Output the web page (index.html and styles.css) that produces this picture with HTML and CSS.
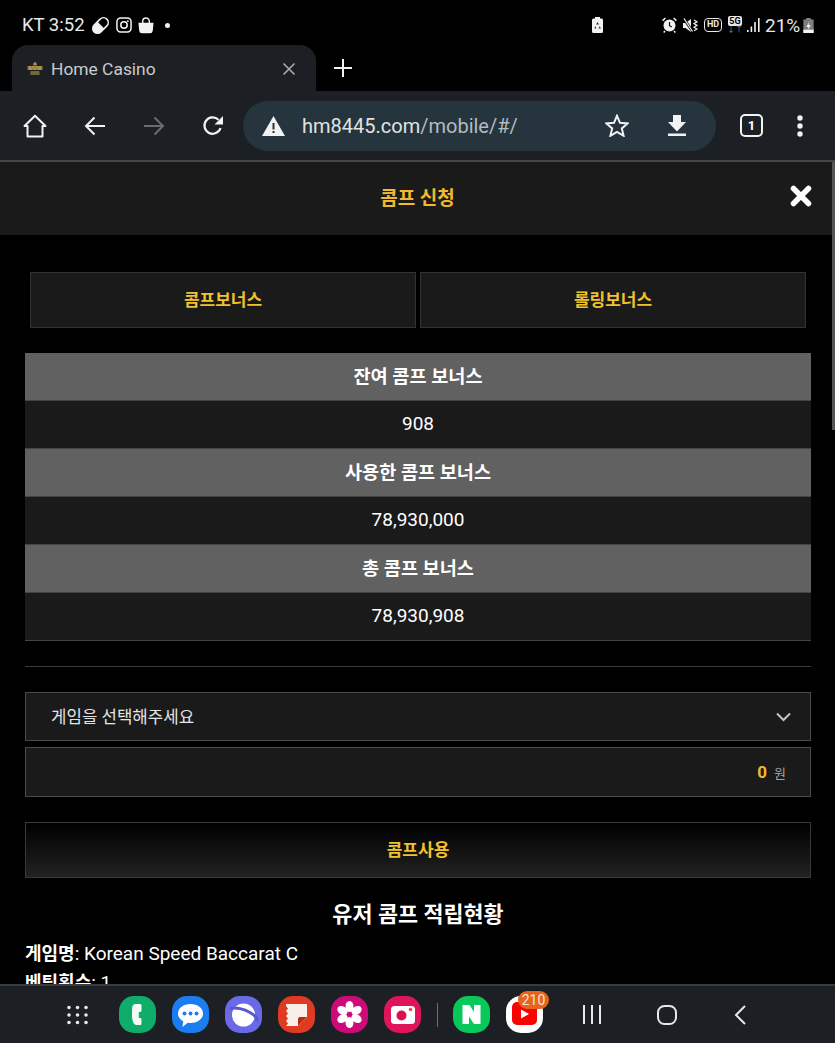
FILE: index.html
```html
<!DOCTYPE html>
<html lang="ko">
<head>
    <meta charset="UTF-8">
    <meta name="viewport" content="width=device-width, initial-scale=1.0">
    <title>Home Casino</title>
    <link rel="stylesheet" href="styles.css">
</head>
<body>
    <div class="status-bar">
        <div class="status-left">
            <span class="status-text">KT 3:52</span>
            <svg class="st-icon st-pill" width="19" height="19" viewBox="0 0 18 18"><g transform="rotate(-45 9 9)"><rect x=".5" y="4.500" width="17" height="9" rx="4.500" fill="none" stroke="#f2f2f2" stroke-width="1.500"/><path d="M5 4.500h4.500v9H5a4.500 4.500 0 0 1 0-9z" fill="#f2f2f2"/></g></svg>
            <svg class="st-icon" width="16" height="16" viewBox="0 0 17 17" fill="none" stroke="#f2f2f2"><rect x="1" y="1" width="15" height="15" rx="4" stroke-width="1.600"/><circle cx="8.500" cy="8.500" r="3.400" stroke-width="1.600"/><circle cx="12.600" cy="4.400" r=".9" fill="#f2f2f2" stroke="none"/></svg>
            <svg class="st-icon" width="16" height="17" viewBox="0 0 17 18"><path d="M.5 6h16l-.8 8.500a3 3 0 0 1-3 2.700H4.300a3 3 0 0 1-3-2.700z" fill="#f2f2f2"/><path d="M5 7V4.500a3.500 3.500 0 0 1 7 0V7" fill="none" stroke="#f2f2f2" stroke-width="1.500"/></svg>
            <span class="st-dot"></span>
        </div>
        <div class="status-mid">
            <svg width="11" height="16" viewBox="0 0 11 16"><path d="M3 0h5v1.500h1.500A1.500 1.500 0 0 1 11 3v11.500a1.500 1.500 0 0 1-1.500 1.500h-8A1.500 1.500 0 0 1 0 14.500V3a1.500 1.500 0 0 1 1.500-1.500H3z" fill="#f2f2f2"/><path d="M5.500 5 7 7.500H4zM3.200 9 4.500 11.500H2.500zM7.800 9l1 2.500H6.500z" fill="#333"/></svg>
        </div>
        <div class="status-right">
            <svg width="15" height="16" viewBox="0 0 15 16"><circle cx="7.500" cy="8.500" r="6" fill="#f2f2f2"/><path d="M7.500 5v3.700l2.300 1.300" fill="none" stroke="#111" stroke-width="1.200"/><path d="M.6 3.600 3.400 1M14.400 3.600 11.600 1M3 14l-1.300 1.500M12 14l1.300 1.500" stroke="#f2f2f2" stroke-width="1.500"/></svg>
            <svg width="15" height="15" viewBox="0 0 15 15"><path d="M0 5h2.500L8 1v13L2.500 10H0z" fill="#f2f2f2"/><path d="M1 1l9 13" stroke="#000" stroke-width="2.500"/><path d="M1 .5l8.500 13" stroke="#f2f2f2" stroke-width="1.200"/><path d="M11 2l3 1.800-3 1.800 3 1.800-3 1.800 3 1.800-3 1.800" fill="none" stroke="#f2f2f2" stroke-width="1.200"/></svg>
            <span class="st-hd">HD</span>
            <span class="st-5g"><b>5G</b><i>↓↑</i></span>
            <svg class="st-signal" width="13" height="14" viewBox="0 0 13 14" fill="#f2f2f2"><rect x="0" y="12" width="1.600" height="2"/><rect x="3.600" y="8.500" width="1.600" height="5.500"/><rect x="7.200" y="4" width="1.600" height="10"/><rect x="11" y="0" width="1.600" height="14"/></svg>
            <span class="status-text status-pct">21%</span>
            <svg class="st-batt" width="11" height="15" viewBox="0 0 11 16"><path d="M3 0h5v1.500h3V16H0V1.500h3z" fill="#7d7d7d"/><rect y="12.500" width="11" height="3.500" fill="#f2f2f2"/><path d="M6.500 4 3 9.500h2.300L4.500 13 8 7.500H5.700z" fill="#f2f2f2"/></svg>
        </div>
    </div>

    <div class="tab-strip">
        <div class="tab">
            <svg class="favicon" width="16" height="15" viewBox="0 0 16 15"><path d="M6 3 8 .5 10 3 9.500 4.500h-3z" fill="#a58a45"/><rect x=".5" y="5" width="15" height="4" fill="#8f7a3e"/><path d="M2 6h2M5 6h2M9 6h2M12 6h2M2 8h3M7 8h2M11 8h3" stroke="#d8c98f" stroke-width=".7"/><rect x="3.500" y="10" width="9" height="4" fill="#7a6632"/></svg>
            <span class="tab-title">Home Casino</span>
            <svg width="14" height="14" viewBox="0 0 14 14"><path d="M1.500 1.500l11 11M12.500 1.500l-11 11" stroke="#aeb1b4" stroke-width="1.500"/></svg>
        </div>
        <svg class="new-tab" width="18" height="18" viewBox="0 0 18 18"><path d="M9 0v18M0 9h18" stroke="#f2f2f2" stroke-width="2"/></svg>
    </div>

    <div class="toolbar">
        <svg class="tb-home" width="24" height="24" viewBox="0 0 24 24" fill="none" stroke="#f2f2f2" stroke-width="2" stroke-linejoin="round"><path d="M1.500 12 12 1.800 22.500 12H19.500V22.500H4.500V12z"/></svg>
        <svg class="tb-back" width="22" height="20" viewBox="0 0 22 20" fill="none" stroke="#f2f2f2" stroke-width="2"><path d="M21 10H2M10.500 1.500 2 10l8.500 8.500"/></svg>
        <svg class="tb-forward" width="22" height="20" viewBox="0 0 22 20" fill="none" stroke="#6a6d70" stroke-width="2"><path d="M1 10h19M11.500 1.500 20 10l-8.500 8.500"/></svg>
        <svg class="tb-reload" width="22" height="22" viewBox="0 0 22 22" fill="none"><path d="M18.500 13a8.200 8.200 0 1 1-2-8.200" stroke="#f2f2f2" stroke-width="2.200"/><path d="M21 1v8.500h-8.500z" fill="#f2f2f2"/></svg>
        <div class="omnibox">
            <svg class="warn" width="23" height="20" viewBox="0 0 23 20"><path d="M11.500 0 23 20H0z" fill="#f2f2f2"/><path d="M10.500 7h2v6.500h-2zM10.500 15h2v2h-2z" fill="#25343d"/></svg>
            <span class="url"><span class="url-host">hm8445.com</span>/mobile/#/</span>
            <svg class="star" width="24" height="23" viewBox="0 0 24 23"><path d="M12 1.800l3 7 7.600.6-5.800 5 1.800 7.400L12 17.900l-6.600 3.900 1.800-7.400-5.800-5L9 8.800z" fill="none" stroke="#f2f2f2" stroke-width="2"/></svg>
            <svg class="dl" width="18" height="21" viewBox="0 0 18 21"><path d="M5 0h8v7h5l-9 9.500L0 7h5z" fill="#f2f2f2"/><rect y="18.500" width="18" height="2.500" fill="#f2f2f2"/></svg>
        </div>
        <span class="tab-count">1</span>
        <svg class="tb-menu" width="6" height="22" viewBox="0 0 6 22" fill="#f2f2f2"><circle cx="3" cy="3" r="2.700"/><circle cx="3" cy="11" r="2.700"/><circle cx="3" cy="19" r="2.700"/></svg>
    </div>

    <div class="page">
        <div class="modal-head">
            <h1 class="modal-title">콤프 신청</h1>
            <svg class="modal-close" width="22" height="22" viewBox="0 0 22 22"><path d="M3.500 3.500l15 15M18.500 3.500l-15 15" stroke="#fff" stroke-width="5.500" stroke-linecap="round"/></svg>
        </div>

        <div class="content">
            <div class="bonus-tabs">
                <button class="bonus-tab">콤프보너스</button>
                <button class="bonus-tab">롤링보너스</button>
            </div>

            <div class="summary">
                <div class="summary-head">잔여 콤프 보너스</div>
                <div class="summary-value">908</div>
                <div class="summary-head">사용한 콤프 보너스</div>
                <div class="summary-value">78,930,000</div>
                <div class="summary-head">총 콤프 보너스</div>
                <div class="summary-value">78,930,908</div>
            </div>

            <div class="divider"></div>

            <div class="field field-select">
                <span>게임을 선택해주세요</span>
                <svg width="15" height="10" viewBox="0 0 15 10"><path d="M1 1.500 7.500 8 14 1.500" fill="none" stroke="#c4c4c4" stroke-width="2"/></svg>
            </div>
            <div class="field field-amount">
                <span class="amount">0</span><span class="won">원</span>
            </div>

            <button class="use-btn">콤프사용</button>

            <h2 class="log-title">유저 콤프 적립현황</h2>
            <p class="log-line"><b>게임명</b>: Korean Speed Baccarat C</p>
            <p class="log-line"><b>베팅횟수</b>: 1</p>
        </div>
        <div class="scroll-thumb"></div>
    </div>

    <div class="nav-bar">
        <svg class="apps" width="21" height="20" viewBox="0 0 21 20" fill="#e8e8e8"><circle cx="2" cy="2.500" r="1.800"/><circle cx="10.500" cy="2.500" r="1.800"/><circle cx="19" cy="2.500" r="1.800"/><circle cx="2" cy="10" r="1.800"/><circle cx="10.500" cy="10" r="1.800"/><circle cx="19" cy="10" r="1.800"/><circle cx="2" cy="17.500" r="1.800"/><circle cx="10.500" cy="17.500" r="1.800"/><circle cx="19" cy="17.500" r="1.800"/></svg>

        <div class="app-icon app-phone">
            <svg width="37" height="37" viewBox="0 0 37 37"><path d="M16.500 8h4.500c1 0 1.500.6 1.500 1.500v5c0 .9-.5 1.500-1.500 1.500h-1.200v6h1.200c1 0 1.500.6 1.500 1.500v4c0 1-.6 1.500-1.500 1.500h-3c-3 0-5-2.500-5-10.500V14c0-4 1-6 3.500-6z" fill="#f4fbf7"/></svg>
        </div>
        <div class="app-icon app-msg">
            <svg width="37" height="37" viewBox="0 0 37 37"><path d="M18.500 8C25.500 8 31 12 31 17.500S25.500 27 18.500 27c-1 0-2 0-2.800-.2L10.500 31l.8-5.700C8 23.600 6 20.800 6 17.500 6 12 11.500 8 18.500 8z" fill="#fff"/><circle cx="12.500" cy="17.500" r="2" fill="#1a7df0"/><circle cx="18.500" cy="17.500" r="2" fill="#1a7df0"/><circle cx="24.500" cy="17.500" r="2" fill="#1a7df0"/></svg>
        </div>
        <div class="app-icon app-internet">
            <svg width="37" height="37" viewBox="0 0 37 37"><circle cx="18.500" cy="19" r="11.500" fill="#fff"/><path d="M6 12.500c5-1.500 13 .5 19 4 4 2.300 7 5 7 7.500" fill="none" stroke="#5a57cf" stroke-width="3" stroke-linecap="round"/></svg>
        </div>
        <div class="app-icon app-notes">
            <svg width="37" height="37" viewBox="0 0 37 37"><path d="M8 8h21v13l-9 9H8l2-2.500L8 25l2-2.500L8 20l2-2.500L8 15l2-2.500L8 10z" fill="#f8efe8"/><path d="M29 21h-7a2 2 0 0 0-2 2v7z" fill="#b92b18"/></svg>
        </div>
        <div class="app-icon app-gallery">
            <svg width="37" height="37" viewBox="0 0 37 37" fill="#fff"><ellipse cx="18.500" cy="10.500" rx="4" ry="5.500"/><ellipse cx="18.500" cy="26.500" rx="4" ry="5.500"/><ellipse cx="11.500" cy="14.500" rx="5.500" ry="4" transform="rotate(30 11.500 14.500)"/><ellipse cx="25.500" cy="14.500" rx="5.500" ry="4" transform="rotate(-30 25.500 14.500)"/><ellipse cx="11.500" cy="22.500" rx="5.500" ry="4" transform="rotate(-30 11.500 22.500)"/><ellipse cx="25.500" cy="22.500" rx="5.500" ry="4" transform="rotate(30 25.500 22.500)"/><circle cx="18.500" cy="18.500" r="2.600" fill="#cc0b78"/></svg>
        </div>
        <div class="app-icon app-camera">
            <svg width="37" height="37" viewBox="0 0 37 37"><rect x="7" y="10" width="24" height="18" rx="3.500" fill="#fff"/><circle cx="17.500" cy="19.500" r="5" fill="#d9124f"/><circle cx="26.500" cy="13.500" r="1.800" fill="#e8503a"/></svg>
        </div>

        <span class="dock-sep"></span>

        <div class="app-icon app-naver">
            <svg width="37" height="37" viewBox="0 0 37 37"><path d="M9.500 9h7l4.500 7V9h6.500v19H21l-5-7.500V28H9.500z" fill="#fff"/></svg>
        </div>
        <div class="app-icon app-youtube">
            <svg width="37" height="37" viewBox="0 0 37 37"><rect x="6" y="6" width="25" height="23" rx="5" fill="#f00"/><path d="M15 13.500l8 4.500-8 4.500z" fill="#fff"/></svg>
            <span class="badge">210</span>
        </div>

        <svg class="nav-recent" width="20" height="19" viewBox="0 0 20 19" stroke="#e8e8e8" stroke-width="2"><path d="M2 0v19M10 0v19M18 0v19"/></svg>
        <svg class="nav-home" width="20" height="20" viewBox="0 0 20 20" fill="none" stroke="#e8e8e8" stroke-width="2"><rect x="1" y="1" width="18" height="18" rx="6.500"/></svg>
        <svg class="nav-back" width="12" height="20" viewBox="0 0 12 20" fill="none" stroke="#e8e8e8" stroke-width="2"><path d="M11 1 2 10l9 9"/></svg>
    </div>
</body>
</html>
```

FILE: styles.css
```css
* {
    box-sizing: border-box;
}
html, body {
    margin: 0;
    height: 1043px;
    overflow: hidden;
}
body {
    display: flex;
    flex-direction: column;
    background: #000;
    color: #fff;
    font-family: Roboto, "Noto Sans CJK KR", sans-serif;
}
svg {
    display: block;
    flex: none;
}

/* phone status bar */
.status-bar {
    height: 45px;
    flex: none;
    display: flex;
    align-items: center;
    padding: 5px 0 0 22px;
}
.status-text {
    font-size: 18.500px;
    color: #e8e8e8;
}
.status-left {
    display: flex;
    align-items: center;
    width: 570px;
}
.st-icon {
    margin-left: 6px;
}
.st-pill {
    margin-left: 6px;
}
.st-dot {
    width: 5px;
    height: 5px;
    margin-left: 11px;
    border-radius: 50%;
    background: #f2f2f2;
}
.status-mid {
    width: 70px;
}
.status-right {
    display: flex;
    align-items: center;
    gap: 6px;
}
.st-hd {
    width: 18px;
    height: 14px;
    border: 1.500px solid #e8e8e8;
    border-radius: 4px;
    font-size: 9px;
    font-weight: 700;
    line-height: 11px;
    text-align: center;
    color: #e8e8e8;
}
.st-5g {
    display: flex;
    flex-direction: column;
    align-items: center;
    width: 14px;
    margin: -2px 0 0;
}
.st-5g b {
    width: 14px;
    height: 10px;
    border-radius: 2px;
    background: #e8e8e8;
    color: #000;
    font-size: 9px;
    line-height: 10px;
    text-align: center;
}
.st-5g i {
    height: 7px;
    font-size: 8px;
    line-height: 7px;
    font-style: normal;
    color: #888;
}
.st-signal {
    margin-left: -1px;
}
.status-pct {
    font-size: 19px;
    margin-left: -1px;
    margin-right: -3px;
}

/* browser chrome */
.tab-strip {
    height: 46px;
    flex: none;
    display: flex;
    align-items: center;
    padding-left: 12px;
}
.tab {
    width: 304px;
    height: 46px;
    display: flex;
    align-items: center;
    padding: 1px 20px 0 15px;
    background: #1c2024;
    border-radius: 16px 16px 0 0;
}
.tab-title {
    flex: 1;
    margin-left: 8px;
    font-size: 17.400px;
    color: #c9cbcd;
}
.new-tab {
    margin-left: 18px;
}
.toolbar {
    height: 69px;
    flex: none;
    display: flex;
    align-items: center;
    padding: 0 0 0 23px;
    background: #1c2024;
}
.tb-back {
    margin-left: 37px;
}
.tb-forward {
    margin-left: 37px;
}
.tb-reload {
    margin-left: 37px;
}
.omnibox {
    width: 473px;
    height: 50px;
    margin-left: 19px;
    display: flex;
    align-items: center;
    padding-left: 19px;
    background: #25343d;
    border-radius: 25px;
}
.url {
    width: 303px;
    margin-left: 17px;
    font-size: 20px;
    color: #b4bbc0;
}
.url-host {
    color: #e0e3e5;
}
.dl {
    margin-left: 39px;
}
.tab-count {
    width: 23px;
    height: 23px;
    margin-left: 24px;
    border: 2px solid #f2f2f2;
    border-radius: 5px;
    font-size: 13px;
    font-weight: 700;
    line-height: 19px;
    text-align: center;
}
.tb-menu {
    margin-left: 34px;
}

/* web page */
.page {
    position: relative;
    flex: 1;
    min-height: 0;
    overflow: hidden;
    border-top: 2px solid #44474a;
    background: #000;
}
.modal-head {
    position: relative;
    height: 73px;
    display: flex;
    align-items: center;
    justify-content: center;
    padding-bottom: 4px;
    background: #1a1a1a;
}
.modal-title {
    margin: 0;
    font-size: 19px;
    font-weight: 700;
    color: #f0b92e;
}
.modal-close {
    position: absolute;
    top: 23px;
    right: 23px;
}
.content {
    padding: 37px 24px 0 25px;
}
.bonus-tabs {
    display: flex;
    gap: 4px;
    padding: 0 5px;
}
.bonus-tab {
    flex: 1;
    height: 56px;
    padding: 0 0 4px;
    background: #1a1a1a;
    border: 1px solid #333;
    color: #f0c22e;
    font: 700 17px Roboto, "Noto Sans CJK KR", sans-serif;
}
.summary {
    margin-top: 25px;
}
.summary-head {
    height: 48px;
    background: #616161;
    border-bottom: 1px solid #444;
    font-size: 18.600px;
    font-weight: 700;
    line-height: 48px;
    text-align: center;
}
.summary-value {
    height: 48px;
    background: #1a1a1a;
    border-bottom: 1px solid #444;
    font-size: 19px;
    line-height: 46px;
    text-align: center;
}
.divider {
    height: 1px;
    margin: 25px 0;
    background: #3d3d3d;
}
.field {
    display: flex;
    align-items: center;
    background: #1a1a1a;
    border: 1px solid #4a4a4a;
}
.field-select {
    height: 49px;
    justify-content: space-between;
    margin-bottom: 6px;
    padding: 0 19px 0 25px;
    font-size: 16.800px;
    color: #e4e4e4;
}
.field-select span {
    margin-bottom: 2px;
}
.field-amount {
    height: 50px;
    justify-content: flex-end;
    padding-right: 24px;
}
.amount {
    font-size: 17px;
    font-weight: 700;
    color: #f0b92e;
}
.won {
    margin-left: 7px;
    font-size: 13px;
    color: #a5a5a5;
}
.use-btn {
    display: block;
    width: 100%;
    height: 56px;
    margin-top: 25px;
    padding: 0 0 4px;
    background: linear-gradient(#000, #222);
    border: 1px solid #3a3a3a;
    color: #f0c22e;
    font: 700 17px Roboto, "Noto Sans CJK KR", sans-serif;
}
.log-title {
    margin: 23px 0 0;
    font-size: 21.800px;
    font-weight: 700;
    line-height: 28px;
    text-align: center;
}
.log-line {
    margin: 0;
    font-size: 19px;
    line-height: 29px;
}
.log-title + .log-line {
    margin-top: 10px;
}
.log-line b {
    font-size: 18px;
    font-weight: 700;
}
.scroll-thumb {
    position: absolute;
    top: 0;
    right: 0;
    width: 3px;
    height: 268px;
    background: #555;
}

/* samsung dock */
.nav-bar {
    height: 59px;
    flex: none;
    display: flex;
    align-items: center;
    padding-left: 67px;
    background: #1c2024;
    border-top: 2px solid #383b3f;
}
.app-icon {
    position: relative;
    width: 37px;
    height: 37px;
    margin-right: 16px;
    border-radius: 15px;
}
.apps {
    margin-right: 31px;
}
.app-phone { background: #0ead69; }
.app-msg { background: #1a7df0; }
.app-internet { background: #6a6ae8; }
.app-notes { background: #e03a22; }
.app-gallery { background: #cc0b78; }
.app-camera { background: #e0145a; }
.app-naver { background: #0ac75c; }
.app-youtube { background: #fff; }
.dock-sep {
    width: 1px;
    height: 24px;
    margin-right: 15px;
    background: #6b6d70;
}
.badge {
    position: absolute;
    top: -5px;
    left: 12px;
    width: 31px;
    height: 18px;
    border-radius: 9px;
    background: #e8641b;
    font-size: 14px;
    line-height: 18px;
    text-align: center;
    color: #f4e2d4;
}
.nav-recent {
    margin-left: 23px;
}
.nav-home {
    margin-left: 55px;
}
.nav-back {
    margin-left: 57px;
}
```
